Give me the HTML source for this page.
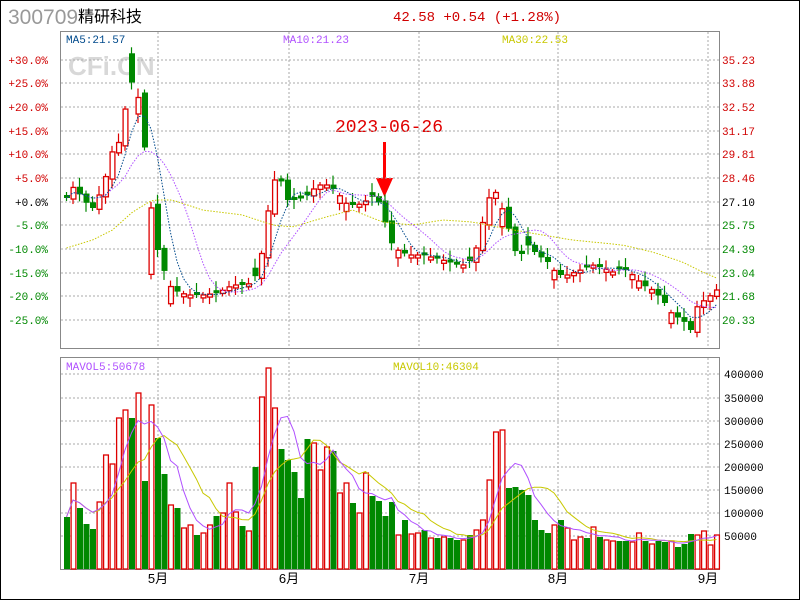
<!DOCTYPE html>
<html><head><meta charset="utf-8"><style>
body{margin:0;background:#fff;}
#w{position:relative;width:798px;height:598px;border:1px solid #000;overflow:hidden;background:#fff;}
svg{position:absolute;left:-1px;top:-1px;}
.m{font-family:"Liberation Mono","DejaVu Sans Mono",monospace;}
.s{font-family:"Liberation Sans","Noto Sans CJK SC",sans-serif;}
</style></head><body><div id="w">
<svg id="s" width="800" height="600" xmlns="http://www.w3.org/2000/svg">
<text class="s" x="8" y="24" font-size="21" fill="#999">300709</text>
<text class="s" x="78" y="22" font-size="16" fill="#000">精研科技</text>
<text class="m" x="393" y="21" font-size="14" fill="#d00000">42.58 +0.54 (+1.28%)</text>
<text class="s" x="68" y="75" font-weight="bold" font-size="26" fill="#d8d8d8">CFi.CN</text>
<text class="m" x="66" y="43" font-size="11" fill="#004a8c">MA5:21.57</text>
<text class="m" x="283" y="43" font-size="11" fill="#b050ff">MA10:21.23</text>
<text class="m" x="502" y="43" font-size="11" fill="#c8c800">MA30:22.53</text>
<text class="m" x="66" y="370" font-size="11" fill="#b050ff">MAVOL5:50678</text>
<text class="m" x="393" y="370" font-size="11" fill="#c8c800">MAVOL10:46304</text>
<text class="m" x="335" y="132" font-size="18" fill="#e00000">2023-06-26</text>
<rect x="383" y="142" width="3" height="40" fill="#f00"/>
<polygon points="376,178 393,178 384.5,197" fill="#f00"/>
<g id="g"></g>
</svg></div>
<script>
var g=document.getElementById('g'),h='';
function L(x1,y1,x2,y2,c,d,w){h+='<line x1="'+x1+'" y1="'+y1+'" x2="'+x2+'" y2="'+y2+'" stroke="'+c+'" stroke-width="'+(w||1)+'"'+(d?' stroke-dasharray="'+d+'"':'')+'/>';}
function T(x,y,t,c,a){h+='<text class="m" x="'+x+'" y="'+y+'" font-size="11" fill="'+c+'"'+(a?' text-anchor="'+a+'"':'')+'>'+t+'</text>';}
var gy=[60,83,107,131,154,178,202,225,249,273,296,320];
var pl=['+30.0%','+25.0%','+20.0%','+15.0%','+10.0%','+5.0%','+0.0%','-5.0%','-10.0%','-15.0%','-20.0%','-25.0%'];
var pr=['35.23','33.88','32.52','31.17','29.81','28.46','27.10','25.75','24.39','23.04','21.68','20.33'];
gy.forEach(function(y,i){L(61,y,719,y,'#aaa','2 2');var c=i<6?'#d00000':(i==6?'#000':'#008800');T(48,y+4,pl[i],c,'end');T(722,y+4,pr[i],c);});
var vy=[374,398,421,444,467,490,513,536],vl=['400000','350000','300000','250000','200000','150000','100000','50000'];
vy.forEach(function(y,i){L(61,y,719,y,'#aaa','2 2');T(724,y+4,vl[i],'#000');});
[158,289,419,558,708].forEach(function(x){L(x,32,x,348,'#aaa','2 2');L(x,358,x,569,'#aaa','2 2');});
h+='<rect x="60.5" y="31.5" width="659" height="317" fill="none" stroke="#888"/>';
h+='<rect x="60.5" y="357.5" width="659" height="212" fill="none" stroke="#888"/>';
[['5月',158],['6月',289],['7月',419],['8月',558],['9月',708]].forEach(function(m){h+='<text class="s" x="'+m[1]+'" y="583" font-size="13" text-anchor="middle" fill="#000">'+m[0]+'</text>';});
var V="g517 r483 g508 g524 g529 r502 r455 r464 r418 r410 g418 r393 g481 r405 g438 g474 r505 g508 r528 r525 g535 r533 r525 g516 r513 r483 r512 g526 r531 g467 r397 r368 r408 g449 g460 g472 g498 g439 r443 r470 r447 g451 r493 r483 g503 r513 r473 g496 g501 g516 g502 r535 g520 r534 r533 g530 r538 g538 r537 g538 g540 r540 g535 r530 r520 r480 r432 r430 g488 g487 g490 g495 g520 g530 g533 r525 g520 r528 r540 r537 g538 r527 g537 r540 r541 g541 g541 r542 r533 g541 r544 g541 g542 r541 g547 g544 g534 r535 r531 r545 r535".split(' ');
var K=[[64,198],[72,185],[80,200],[90,208],[100,188],[110,150],[118,140],[126,85],[132,80],[138,110],[146,185],[152,240],[158,260],[166,285],[175,292],[185,295],[200,295],[215,293],[230,285],[245,285],[256,272],[262,235],[270,180],[278,180],[285,200],[295,200],[305,195],[315,185],[325,185],[332,190],[345,205],[355,205],[365,200],[372,195],[380,210],[386,240],[395,250],[405,255],[420,255],[440,260],[455,265],[465,265],[475,245],[485,200],[492,190],[500,210],[508,235],[515,260],[525,245],[535,255],[545,262],[555,275],[565,275],[578,270],[590,265],[600,268],[610,272],[620,268],[630,275],[640,285],[650,290],[660,300],[670,315],[680,320],[688,330],[695,305],[705,298],[714,290]];
var K30=[[64,248],[90,240],[110,230],[130,212],[150,200],[170,200],[200,210],[240,215],[270,225],[290,227],[320,218],[350,210],[380,222],[410,225],[440,220],[470,222],[500,228],[540,235],[570,240],[620,245],[650,252],[680,262],[700,272],[714,278]];
function f(K,x){for(var i=0;i<K.length-1;i++){if(x<=K[i+1][0]){var t=(x-K[i][0])/(K[i+1][0]-K[i][0]);return K[i][1]+t*(K[i+1][1]-K[i][1]);}}return K[K.length-1][1];}
var N=V.length,C=[],X=[],VV=[],M30=[];
for(var i=0;i<N;i++){X.push(64+6.5*i);C.push(f(K,64+6.5*i));M30.push(f(K30,64+6.5*i));}
var ma=function(a,n){return a.map(function(v,i){var s=0,k=0;for(var j=Math.max(0,i-n+1);j<=i;j++){s+=a[j];k++;}return s/k;});};
function pl2(a,c,d,w,s){var p='';a.forEach(function(v,i){if(i>=s)p+=(p?'L':'M')+(X[i]+2.5).toFixed(1)+' '+v.toFixed(1);});h+='<path d="'+p+'" fill="none" stroke="'+c+'" stroke-width="'+(w||1)+'"'+(d?' stroke-dasharray="'+d+'"':'')+'/>';}
for(var i=0;i<N;i++){
 var up=V[i][0]=='r',tp=+V[i].slice(1),x=X[i],c=C[i];VV.push(569-tp);
 var d=Math.max(3,Math.abs(c-(i?C[i-1]:c))*1.1);
 var o=up?c+d:c-d,t=Math.min(o,c),b=Math.max(o,c),hi=t-3-(i%3)*3,lo=b+3+(i%4)*2;
 var col=up?'#dd0000':'#008800';
 L(x+2.5,hi,x+2.5,lo,col,0,1.2);
 if(up)h+='<rect x="'+(x+0.6)+'" y="'+t+'" width="4.8" height="'+(b-t)+'" fill="#fff" stroke="'+col+'" stroke-width="1.3"/>';
 else h+='<rect x="'+x+'" y="'+t+'" width="6" height="'+(b-t)+'" fill="'+col+'"/>';
 if(up)h+='<rect x="'+(x+0.6)+'" y="'+tp+'" width="4.8" height="'+(569-tp)+'" fill="#fff" stroke="'+col+'" stroke-width="1.3"/>';
 else h+='<rect x="'+x+'" y="'+tp+'" width="6" height="'+(569-tp)+'" fill="'+col+'"/>';
}
pl2(M30,'#c8c800','1.5 1.5',1,0);
pl2(ma(C,10),'#b050ff','1.5 1.5',1,0);
pl2(ma(C,5),'#004a8c','1.5 1.5',1,0);
var v5=ma(VV,5).map(function(v){return 569-v}),v10=ma(VV,10).map(function(v){return 569-v});
pl2(v10,'#c8c800',0,1,0);pl2(v5,'#b050ff',0,1,0);
g.innerHTML=h;
</script></body></html>
